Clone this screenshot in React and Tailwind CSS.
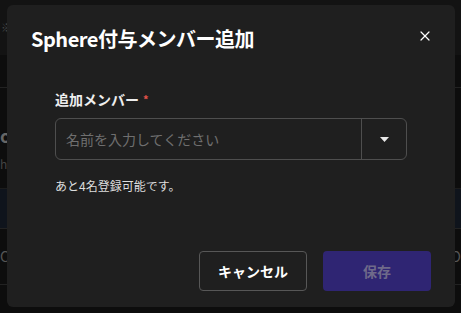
import { X } from 'lucide-react'

export default function App() {
  return (
    <div
      className="relative h-[313px] w-full overflow-hidden bg-[#0d0d0d] text-white"
      style={{ fontFamily: '"Noto Sans CJK JP", "Noto Sans", sans-serif' }}
    >
      {/* page behind the dialog */}
      <div className="h-[55px] bg-[#131313] pl-[1px] pt-[22px] text-[11px] leading-none text-[#444]">※</div>
      <div className="h-[33px] border-b border-[#222]" />
      <div className="pt-[38px] text-[18px] font-bold leading-none text-[#666]">ol</div>
      <div className="pt-[14px] text-[12px] leading-none text-[#444]">he</div>
      <div className="mt-[18px] h-[40px] border-t border-[#1c1c1c] bg-[#0f141c]" />
      <div className="flex h-[57px] items-center justify-between border-y border-[#222] text-[14px] text-[#555]">
        <span>C</span>
        <span>O</span>
      </div>

      {/* modal */}
      <div className="absolute inset-0 flex items-start justify-start pl-[7px] pt-[5px]">
        <div className="flex h-[302px] w-[448px] flex-col rounded-[6px] bg-[#1f1f1f]">
          <div className="flex items-start justify-between pl-6 pr-[22px] pt-[20px]">
            <h2 className="text-[20px] font-semibold leading-[28px] tracking-[-0.5px] text-white">
              Sphere付与メンバー追加
            </h2>
            <button className="mt-[3px] text-white">
              <X size={16} strokeWidth={1.8} />
            </button>
          </div>

          <div className="px-12 pt-[36px]">
            <label className="flex items-center gap-1 text-[14px] font-bold leading-[20px] text-[#eee]">
              追加メンバー
              <span className="text-[11px] leading-[16px] text-[#e5534b]">*</span>
            </label>
            <div className="mt-[9px] flex h-[42px] items-stretch rounded-[6px] border border-[#4e4e4e]">
              <input
                className="min-w-0 flex-1 bg-transparent px-[10px] text-[14px] text-white outline-none placeholder:text-[#6f6f6f]"
                placeholder="名前を入力してください"
              />
              <div className="flex w-[45px] items-center justify-center border-l border-[#4e4e4e]">
                <svg width="9" height="5" viewBox="0 0 9 5">
                  <path d="M0 0 H9 L4.5 5 Z" fill="#e8e8e8" />
                </svg>
              </div>
            </div>
            <p className="mt-[17px] text-[12px] leading-[18px] text-[#ddd]">あと4名登録可能です。</p>
          </div>

          <div className="mt-auto flex justify-end gap-4 px-6 pb-[16px]">
            <button className="h-[40px] w-[108px] rounded-[4px] border border-[#575757] text-[14px] font-bold text-white">
              キャンセル
            </button>
            <button className="h-[40px] w-[108px] rounded-[4px] bg-[#2f2573] text-[14px] font-bold text-[#6f6a8a]">
              保存
            </button>
          </div>
        </div>
      </div>
    </div>
  )
}
